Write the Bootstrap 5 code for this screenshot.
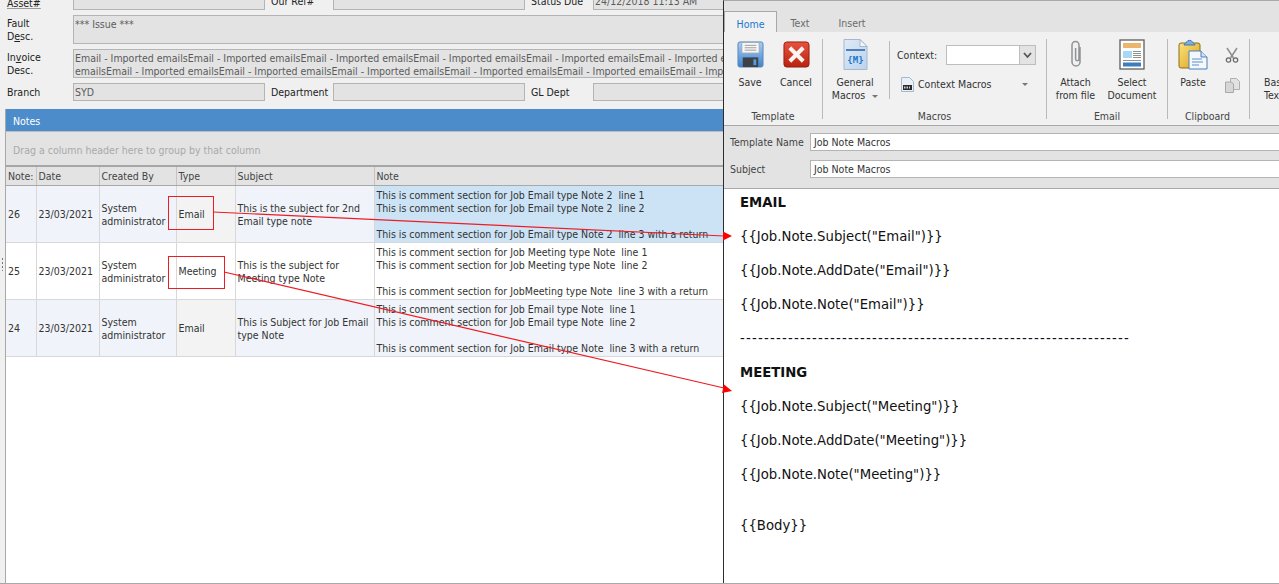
<!DOCTYPE html>
<html lang="en">
<head>
<meta charset="utf-8">
<title>Job Note Macros</title>
<link href="https://cdn.jsdelivr.net/npm/bootstrap@5.3.0/dist/css/bootstrap.min.css" rel="stylesheet">
<style>
html,body{height:584px;overflow:hidden;background:#f0f0f0}
body{font-family:"DejaVu Sans Condensed","DejaVu Sans",sans-serif;font-stretch:condensed;font-size:10.5px;line-height:13px;color:#333;position:relative}
.screen{height:584px;border-bottom:1px solid #a8a8a8}
.leftpane{width:723px;flex:none;overflow:hidden;background:#f0f0f0}
.formarea{padding:0 0 0 7px;height:109px;overflow:hidden}
.frow{display:flex;width:800px}
.frow-first{margin-top:-8px;height:18px;margin-bottom:5px}
.frow-fault{height:29px;margin-bottom:5px}
.frow-inv{height:29px;margin-bottom:5px}
.frow-branch{height:18px}
.flabel{flex:none;color:#222;display:flex;align-items:center}
.flabel-a{width:66px}
.flabel-b{width:62px;margin-left:6px}
.field{background:#e3e3e3;border:1px solid #b4b4b4;color:#5b5b5b;padding:2px 1px 0;white-space:nowrap;overflow:hidden;flex:none}
.field-s{width:192px;display:flex;align-items:center;padding-top:0}
.field-w{width:660px}
.asset span{text-decoration:underline;text-decoration-color:#999}
.asset{align-items:flex-end}
.notesbox{margin-left:5px;border-radius:0;border:0;background:#fff;height:474px;--bs-card-bg:#fff;border-left:1px solid #a8a8a8}
.noteshead{background:#4d8ccb;color:#fff;height:22px;padding:5px 7px 0;border:0;border-radius:0!important;line-height:14px}
.groupbar{background:#e3e3e3;height:36px;color:#a9a9a9;padding:12px 7px 0;border-top:1px solid #bdbdbd;border-bottom:2px solid #a6a6a6}
.gridtable{table-layout:fixed;width:718px;margin:0;border-collapse:collapse;--bs-table-bg:transparent;color:#333}
.gridtable th,.gridtable td{border:1px solid #d8d8d8;border-width:0 1px 1px 0;padding:0 2px;overflow:hidden;white-space:nowrap;vertical-align:middle;font-weight:400;color:#333;box-shadow:none}
.gridtable thead th{background:#e3e3e3;height:18px;padding-top:2px;border-color:#c4c4c4;border-bottom:1px solid #a8a8a8;color:#444}
.gridtable tbody td{height:57px;line-height:13px;padding-top:1px}
.gridtable tbody td.wrapcell{white-space:normal;padding-top:3px}
.rowtint td{background:#f0f4fa}
.gridtable .typetint{background:#f3f3f4}
.gridtable .selcell{background:#cce3f6}
.gridtable tbody td.notecell{vertical-align:top;padding-top:3px;white-space:nowrap}
.gridgutter{position:absolute;left:1px;top:257px;width:3px;height:14px;background:radial-gradient(circle,#777 1px,transparent 1px) 0 0/3px 4px}
.rightpane{flex:1 1 auto;min-width:0;border-left:1px solid #2d2d2d;border-top:1px solid #a8a8a8;overflow:hidden;display:flex;flex-direction:column;background:#fff}
.tabstrip{background:#e3e3e3;height:32px;padding-top:10px;border-bottom:1px solid #a8a8a8;flex:none;flex-wrap:nowrap}
.tabstrip .nav-link{border:0;border-radius:0;color:#6b6b6b;padding:0;height:22px;line-height:24px;text-align:center;background:transparent;margin:0}
.tabstrip .nav-link.active{background:#f1f1f1;color:#1878d2;border:1px solid #a8a8a8;border-bottom:0;width:53px}
.tabtext{width:46px}
.tabinsert{width:58px}
.ribbon{background:#f1f1f1;height:94px;flex:none;border-bottom:1px solid #a8a8a8;display:flex;overflow:hidden;margin-top:-1px;padding-top:1px}
.ribgroup{flex:none;display:flex;flex-direction:column;height:80px;margin-top:6px;border-right:1px solid #b9b9b9}
.ribbody{display:flex;height:68px;flex:none;color:#333}
.riblabel{text-align:center;color:#444;height:14px;flex:none;line-height:14px;margin-top:2px}
.ribbtn{flex:none;display:flex;flex-direction:column;align-items:center;text-align:center;color:#333;line-height:13px}
.ribicon{height:31px;display:flex;align-items:center;justify-content:center;margin-bottom:6px}
.g-template{width:99px}.g-macros{width:224px}.g-email{width:121px}.g-clip{width:82px}.g-basic{width:40px;border-right:0}
.macrosplit{border-left:1px solid #b9b9b9;height:58px;margin-left:5px;margin-top:2px;padding-left:7px;width:158px;flex:none}
.ctxrow{display:flex;align-items:center;height:20px;margin-top:4px}
.combo{width:90px;height:20px;margin-left:9px;border:1px solid #bdbdbd;background:#fff;display:flex;justify-content:flex-end}
.combobtn{width:16px;background:#e3e3e3;border-left:1px solid #bdbdbd;display:flex;align-items:center;justify-content:center}
.ctxmacros{display:flex;align-items:center;margin-top:10px;margin-left:4px;height:18px;width:127px}
.caretx{width:0;height:0;border:3px solid transparent;border-top:3px solid #777;border-bottom:0;display:inline-block}
.fieldsbar{background:#e3e3e3;height:63px;flex:none;padding:7px 0 0 6px;border-bottom:1px solid #a8a8a8}
.fieldrow{display:flex;align-items:center;height:18px;margin-bottom:9px;color:#444}
.fieldrow .fname{width:80px;flex:none}
.fieldrow .form-control{border:1px solid #b4b4b4;border-right:0;border-radius:0;padding:0 3px;font-size:10.5px;line-height:16px;height:18px;color:#333;min-height:0;flex:1}
.editor{flex:1;background:#fff;font-family:"DejaVu Sans",Verdana,sans-serif;font-stretch:normal;font-size:13.25px;line-height:17px;color:#111;padding:5px 0 0 16px;overflow:hidden;white-space:nowrap}
.editor p{margin:0 0 17px}
.editor .dashline{letter-spacing:1.22px}
.editor .bodyline{padding-top:17px}
.overlay{position:absolute;left:0;top:0;width:1279px;height:584px;pointer-events:none}
</style>
</head>
<body>
<div class="screen d-flex">
  <div class="leftpane">
    <div class="formarea">
      <div class="frow frow-first">
        <div class="flabel flabel-a asset"><span>Asset#</span></div><div class="field field-s"></div>
        <div class="flabel flabel-b">Our Ref#</div><div class="field field-s"></div>
        <div class="flabel flabel-b">Status Due</div><div class="field field-s">24/12/2018 11:13 AM</div>
      </div>
      <div class="frow frow-fault">
        <div class="flabel flabel-a"><span>Fault<br>D<u>e</u>sc.</span></div><div class="field field-w">*** Issue ***</div>
      </div>
      <div class="frow frow-inv">
        <div class="flabel flabel-a"><span>In<u>v</u>oice<br>Desc.</span></div>
        <div class="field field-w">Email - Imported emailsEmail - Imported emailsEmail - Imported emailsEmail - Imported emailsEmail - Imported emailsEmail - Imported emails<br>emailsEmail - Imported emailsEmail - Imported emailsEmail - Imported emailsEmail - Imported emailsEmail - Imported emailsEmail - Imported</div>
      </div>
      <div class="frow frow-branch">
        <div class="flabel flabel-a">Branch</div><div class="field field-s">SYD</div>
        <div class="flabel flabel-b">Department</div><div class="field field-s"></div>
        <div class="flabel flabel-b">GL Dept</div><div class="field field-s"></div>
      </div>
    </div>
    <div class="card notesbox">
      <div class="card-header noteshead">Notes</div>
      <div class="groupbar">Drag a column header here to group by that column</div>
      <table class="table gridtable">
        <colgroup><col style="width:30px"><col style="width:63px"><col style="width:77px"><col style="width:59px"><col style="width:139px"><col></colgroup>
        <thead><tr><th>Note:</th><th>Date</th><th>Created By</th><th>Type</th><th>Subject</th><th>Note</th></tr></thead>
        <tbody>
          <tr class="rowtint">
            <td>26</td><td>23/03/2021</td><td class="wrapcell">System administrator</td><td class="typetint">Email</td>
            <td class="wrapcell">This is the subject for 2nd Email type note</td>
            <td class="notecell selcell">This is comment section for Job Email type Note 2&nbsp; line 1<br>This is comment section for Job Email type Note 2&nbsp; line 2<br><br>This is comment section for Job Email type Note 2&nbsp; line 3 with a return</td>
          </tr>
          <tr>
            <td>25</td><td>23/03/2021</td><td class="wrapcell">System administrator</td><td>Meeting</td>
            <td class="wrapcell">This is the subject for Meeting type Note</td>
            <td class="notecell">This is comment section for Job Meeting type Note&nbsp; line 1<br>This is comment section for Job Meeting type Note&nbsp; line 2<br><br>This is comment section for JobMeeting type Note&nbsp; line 3 with a return</td>
          </tr>
          <tr class="rowtint">
            <td>24</td><td>23/03/2021</td><td class="wrapcell">System administrator</td><td class="typetint">Email</td>
            <td class="wrapcell">This is Subject for Job Email type Note</td>
            <td class="notecell">This is comment section for Job Email type Note&nbsp; line 1<br>This is comment section for Job Email type Note&nbsp; line 2<br><br>This is comment section for Job Email type Note&nbsp; line 3 with a return</td>
          </tr>
        </tbody>
      </table>
    </div>
  </div>
  <div class="rightpane">
    <ul class="nav tabstrip">
      <li class="nav-item"><a class="nav-link active" href="#">Home</a></li>
      <li class="nav-item"><a class="nav-link tabtext" href="#">Text</a></li>
      <li class="nav-item"><a class="nav-link tabinsert" href="#">Insert</a></li>
    </ul>
    <div class="ribbon">
      <div class="ribgroup g-template">
        <div class="ribbody">
          <div class="ribbtn" style="width:50px;margin-left:1px">
            <div class="ribicon">
              <svg width="27" height="27" viewBox="0 0 28 28"><defs><linearGradient id="fl" x1="0" y1="0" x2="0" y2="1"><stop offset="0" stop-color="#a9cdf3"/><stop offset="1" stop-color="#3f83cf"/></linearGradient></defs><rect x="1" y="1" width="26" height="26" rx="2" fill="url(#fl)" stroke="#5a86b8"/><rect x="5" y="1.500" width="18" height="11" fill="#f7f7f7" stroke="#9ab"/><path d="M8 4.500h12M8 7h12M8 9.500h12" stroke="#9a9a9a"/><rect x="6" y="17" width="16" height="10" fill="#3c4248"/><rect x="17" y="19" width="3" height="6" fill="#5b9bd8"/></svg>
            </div>Save
          </div>
          <div class="ribbtn" style="width:42px">
            <div class="ribicon">
              <svg width="27" height="27" viewBox="0 0 28 28"><defs><linearGradient id="rd" x1="0" y1="0" x2="0" y2="1"><stop offset="0" stop-color="#e8523f"/><stop offset="1" stop-color="#b8220f"/></linearGradient></defs><rect x="1" y="1" width="26" height="26" rx="3" fill="url(#rd)" stroke="#93200f"/><path d="M8.500 8.500L19.500 19.500M19.500 8.500L8.500 19.500" stroke="#fbf4f1" stroke-width="4.200" stroke-linecap="square"/></svg>
            </div>Cancel
          </div>
        </div>
        <div class="riblabel">Template</div>
      </div>
      <div class="ribgroup g-macros">
        <div class="ribbody">
          <div class="ribbtn" style="width:58px;margin-left:3px">
            <div class="ribicon">
              <svg width="25" height="31" viewBox="0 0 25 31"><defs><linearGradient id="mc" x1="0" y1="0" x2="1" y2="1"><stop offset="0" stop-color="#dfeaf8"/><stop offset="1" stop-color="#bcd3ee"/></linearGradient></defs><path d="M1 .5h16l7 7v23H1z" fill="url(#mc)" stroke="#a7b8cc"/><path d="M17 .5v7h7z" fill="#f3f7fc" stroke="#a7b8cc"/><rect x="3" y="10" width="19" height="2" fill="#4f7fb8"/><text x="12.500" y="24" text-anchor="middle" font-family="DejaVu Sans Mono, monospace" font-size="9" font-weight="700" fill="#1d77c8">{M}</text></svg>
            </div>
            <div>General<br>Macros <span class="caretx ms-1 align-middle"></span></div>
          </div>
          <div class="macrosplit">
            <div class="ctxrow">Context:<div class="combo"><div class="combobtn"><svg width="9" height="7" viewBox="0 0 9 7"><path d="M1 1l3.500 4L8 1" fill="none" stroke="#555" stroke-width="1.800"/></svg></div></div></div>
            <div class="ctxmacros">
              <svg class="flex-none" width="13" height="15" viewBox="0 0 13 15"><path d="M.5.5h8l4 4v10H.5z" fill="#e8eff8" stroke="#a7b8cc"/><rect x="2" y="8" width="9" height="5" fill="#2b2b2b"/><path d="M3.500 9.500v2M5 9.500v2M6.500 9.500v2M8.500 9.500v2" stroke="#fff" stroke-width=".8"/></svg>
              <span class="ms-1">Context Macros</span><span class="caretx ms-auto"></span>
            </div>
          </div>
        </div>
        <div class="riblabel">Macros</div>
      </div>
      <div class="ribgroup g-email">
        <div class="ribbody">
          <div class="ribbtn" style="width:55px;margin-left:1px">
            <div class="ribicon">
              <svg width="14" height="29" viewBox="0 0 14 29"><path d="M11 7v15a4 4 0 0 1-8 0V5a3.500 3.500 0 0 1 7 0v14a1.700 1.700 0 0 1-3.400 0V8" fill="none" stroke="#8d9297" stroke-width="1.500"/></svg>
            </div>Attach<br>from file
          </div>
          <div class="ribbtn" style="width:58px">
            <div class="ribicon">
              <svg width="26" height="31" viewBox="0 0 26 31"><rect x="1" y="1" width="24" height="29" fill="#fff" stroke="#5e5e5e" stroke-width="1.300"/><rect x="4" y="4" width="18" height="5" fill="#ecb46c"/><rect x="4" y="12" width="9" height="7" fill="#a8d8f4"/><path d="M14 12.500h8M14 14.500h8M14 16.500h8M14 18.500h8M4 21.500h18" stroke="#8f8f8f"/><rect x="4" y="23.500" width="18" height="4" fill="#3d7dbd"/></svg>
            </div>Select<br>Document
          </div>
        </div>
        <div class="riblabel">Email</div>
      </div>
      <div class="ribgroup g-clip">
        <div class="ribbody">
          <div class="ribbtn" style="width:48px;margin-left:1px">
            <div class="ribicon">
              <svg width="30" height="31" viewBox="0 0 30 31"><defs><linearGradient id="cb" x1="0" y1="0" x2="1" y2="1"><stop offset="0" stop-color="#fbe27d"/><stop offset="1" stop-color="#d9a21b"/></linearGradient></defs><rect x="1" y="4" width="21" height="25" rx="2" fill="url(#cb)" stroke="#8b6d1a"/><path d="M6 6c0-2 3-2 3-3.500C9 1 14 1 14 2.500 14 4 17 4 17 6z" fill="#7fb0dc" stroke="#4478ac"/><path d="M11 12h12l6 6v12H11z" fill="#f4f8fd" stroke="#4a80b8"/><path d="M23 12v6h6" fill="#cfe0f3" stroke="#4a80b8"/><path d="M14 20h10M14 23h11M14 26h7" stroke="#5a92c9"/></svg>
            </div>Paste
          </div>
          <div class="d-flex flex-column align-items-center" style="width:30px">
            <svg class="mt-2" width="14" height="16" viewBox="0 0 14 16"><path d="M2 1l6.500 10M12 1L5.500 11" stroke="#8a8f94" stroke-width="1.500" fill="none"/><circle cx="3.500" cy="13" r="2.200" fill="none" stroke="#666" stroke-width="1.200"/><circle cx="10.500" cy="13" r="2.200" fill="none" stroke="#666" stroke-width="1.200"/></svg>
            <svg style="margin-top:15px" width="15" height="15" viewBox="0 0 15 15"><path d="M5.500.5h6l3 3v8h-9z" fill="#e2e2e2" stroke="#b0b0b0"/><path d="M.5 4h6l2 2v8.500h-8z" fill="#d6d6d6" stroke="#a9a9a9"/></svg>
          </div>
        </div>
        <div class="riblabel" style="padding-right:2px">Clipboard</div>
      </div>
      <div class="ribgroup g-basic">
        <div class="ribbody"><div class="ribbtn" style="padding:37px 0 0 14px;text-align:left;align-items:flex-start">Basic<br>Text</div></div>
      </div>
    </div>
    <div class="fieldsbar">
      <div class="fieldrow"><div class="fname">Template Name</div><div class="form-control">Job Note Macros</div></div>
      <div class="fieldrow"><div class="fname">Subject</div><div class="form-control">Job Note Macros</div></div>
    </div>
    <div class="editor">
      <p><b>EMAIL</b></p>
      <p>{{Job.Note.Subject("Email")}}</p>
      <p>{{Job.Note.AddDate("Email")}}</p>
      <p>{{Job.Note.Note("Email")}}</p>
      <p class="dashline">-----------------------------------------------------------------</p>
      <p><b>MEETING</b></p>
      <p>{{Job.Note.Subject("Meeting")}}</p>
      <p>{{Job.Note.AddDate("Meeting")}}</p>
      <p>{{Job.Note.Note("Meeting")}}</p>
      <p class="bodyline">{{Body}}</p>
    </div>
  </div>
</div>
<div class="gridgutter"></div>
<svg class="overlay" viewBox="0 0 1279 584">
  <rect x="168.500" y="196.500" width="45" height="33" fill="none" stroke="#ed1c24"/>
  <rect x="168.500" y="256.500" width="56" height="32" fill="none" stroke="#ed1c24"/>
  <path d="M213 212L724 236M224 272L724 388" stroke="#ed1c24" stroke-width="1.200" fill="none"/>
  <path d="M732 236L723 231.500V240.500z" fill="#ff0000"/>
  <path d="M732 391L724 384.500L722 393z" fill="#ff0000"/>
</svg>
</body>
</html>
